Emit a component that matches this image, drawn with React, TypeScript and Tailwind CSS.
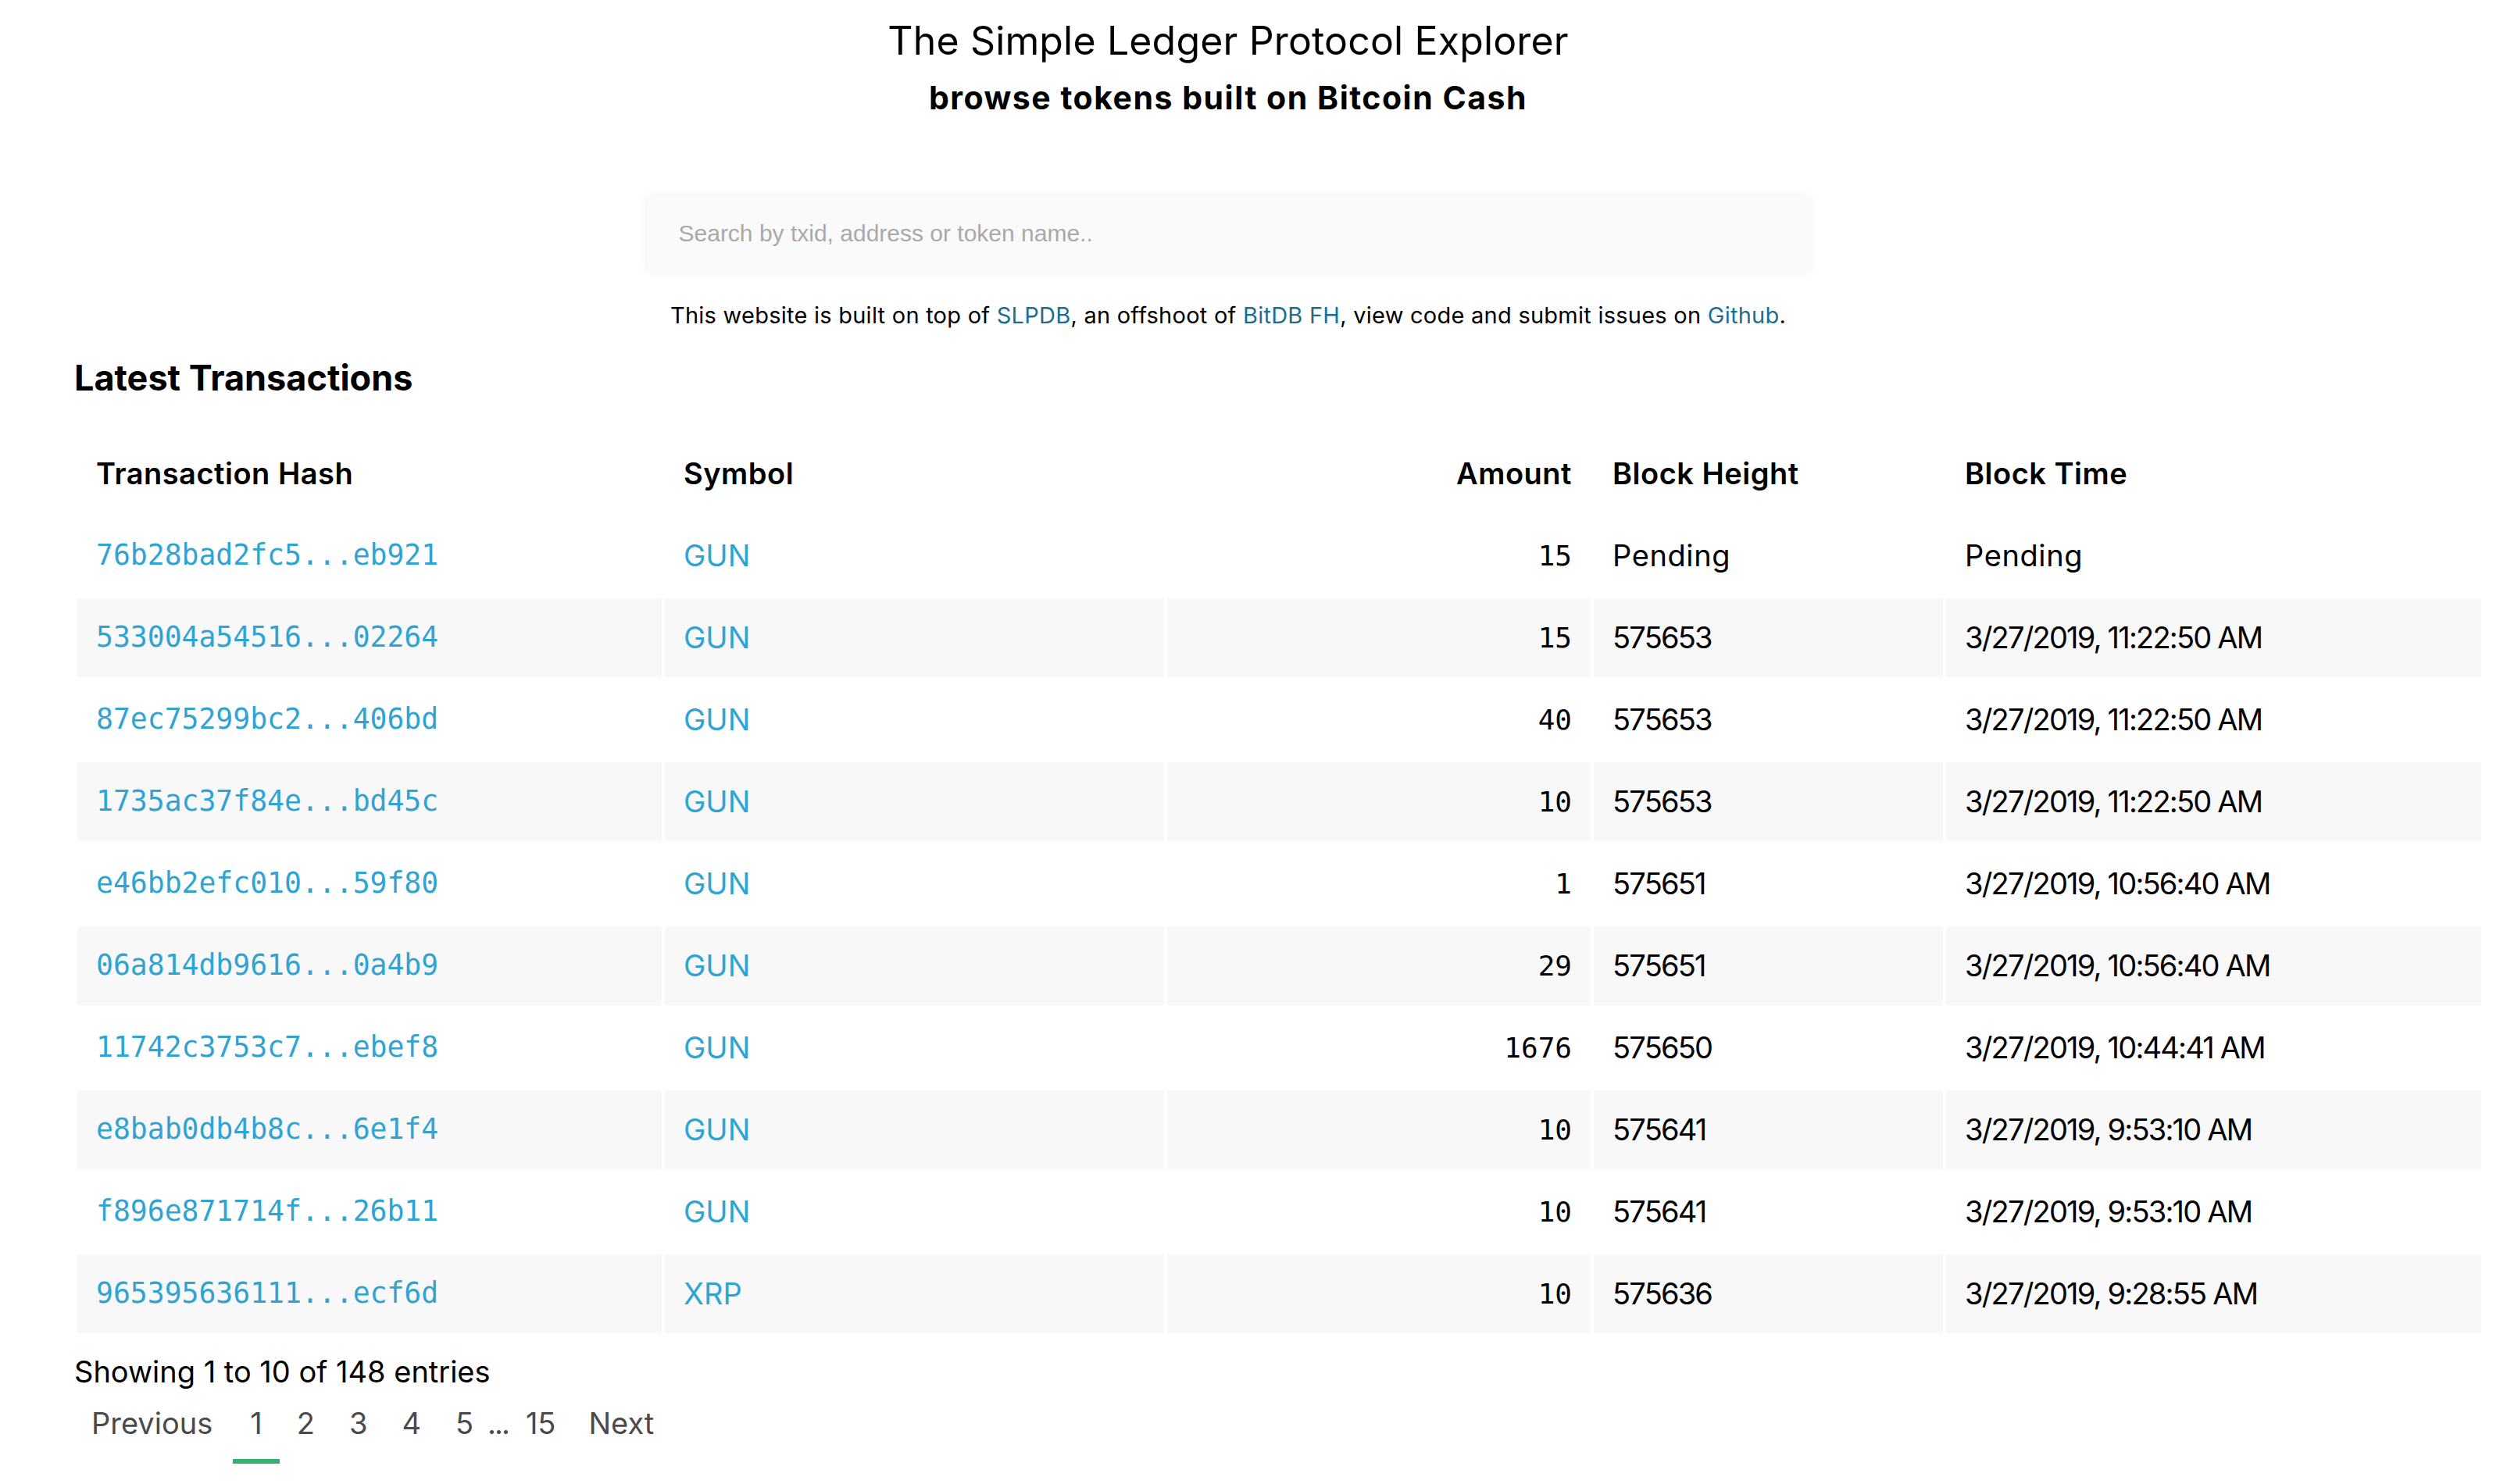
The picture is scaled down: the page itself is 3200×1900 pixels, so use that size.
const rows = [
  { hash: "76b28bad2fc5...eb921", sym: "GUN", amount: "15", height: "Pending", time: "Pending" },
  { hash: "533004a54516...02264", sym: "GUN", amount: "15", height: "575653", time: "3/27/2019, 11:22:50 AM" },
  { hash: "87ec75299bc2...406bd", sym: "GUN", amount: "40", height: "575653", time: "3/27/2019, 11:22:50 AM" },
  { hash: "1735ac37f84e...bd45c", sym: "GUN", amount: "10", height: "575653", time: "3/27/2019, 11:22:50 AM" },
  { hash: "e46bb2efc010...59f80", sym: "GUN", amount: "1", height: "575651", time: "3/27/2019, 10:56:40 AM" },
  { hash: "06a814db9616...0a4b9", sym: "GUN", amount: "29", height: "575651", time: "3/27/2019, 10:56:40 AM" },
  { hash: "11742c3753c7...ebef8", sym: "GUN", amount: "1676", height: "575650", time: "3/27/2019, 10:44:41 AM" },
  { hash: "e8bab0db4b8c...6e1f4", sym: "GUN", amount: "10", height: "575641", time: "3/27/2019, 9:53:10 AM" },
  { hash: "f896e871714f...26b11", sym: "GUN", amount: "10", height: "575641", time: "3/27/2019, 9:53:10 AM" },
  { hash: "965395636111...ecf6d", sym: "XRP", amount: "10", height: "575636", time: "3/27/2019, 9:28:55 AM" },
];

const pages = ["1", "2", "3", "4", "5"];

// numbers in the original font run narrower than Inter's, letters wider
function numCls(v: string) {
  return v === "Pending" ? "px-[24px] tracking-[0.6px]" : "px-[24px] tracking-[-1.8px]";
}

export default function App() {
  return (
    <div className="min-h-screen bg-white text-black font-['Inter',sans-serif]">
      <header className="w-[3144px] flex flex-col items-center pt-[22px]">
        <h1 className="text-[50px] leading-[60px] font-normal tracking-[0.15px]">The Simple Ledger Protocol Explorer</h1>
        <h2 className="mt-[19px] text-[41px] leading-[48px] font-bold tracking-[1.5px]">browse tokens built on Bitcoin Cash</h2>
        <div className="mt-[101px] w-[1489px] h-[97px] bg-[#fafafa] shadow-[0_0_12px_rgba(0,0,0,0.06)] flex items-center pl-[41px] pr-[20px]">
          <input
            type="text"
            placeholder="Search by txid, address or token name.."
            className="w-full bg-transparent outline-none text-[30px] font-['Liberation_Sans',sans-serif] placeholder:text-[#a9a9a9]"
          />
        </div>
        <p className="mt-[40px] text-[29px] leading-[34px] tracking-[0.25px]">
          This website is built on top of <a className="text-[#1d6e8e]">SLPDB</a>, an offshoot of{" "}
          <a className="text-[#1d6e8e]">BitDB FH</a>, view code and submit issues on{" "}
          <a className="text-[#1d6e8e]">Github</a>.
        </p>
      </header>

      <main className="pl-[95px]">
        <h3 className="mt-[36px] text-[45px] leading-[54px] font-bold">Latest Transactions</h3>

        <table className="mt-[41px] w-[3085px] table-fixed border-separate border-spacing-[4px] text-[38px]">
          <thead>
            <tr className="h-[101px] text-[38px] font-semibold tracking-[0.5px]">
              <th className="w-[748px] px-[24px] text-left font-semibold">Transaction Hash</th>
              <th className="w-[639px] px-[24px] text-left font-semibold">Symbol</th>
              <th className="w-[542px] px-[24px] text-right font-semibold">Amount</th>
              <th className="w-[447px] px-[24px] text-left font-semibold">Block Height</th>
              <th className="w-[685px] px-[24px] text-left font-semibold">Block Time</th>
            </tr>
          </thead>
          <tbody>
            {rows.map((r, i) => (
              <tr key={r.hash} className={i % 2 === 1 ? "h-[101px] bg-[#f8f8f8]" : "h-[101px]"}>
                <td className="px-[24px] font-['DejaVu_Sans_Mono',monospace] text-[36.4px] text-[#2fa4d3]">
                  <a>{r.hash}</a>
                </td>
                <td className="px-[24px] text-[#2fa4d3]">
                  <a>{r.sym}</a>
                </td>
                <td className="px-[24px] text-right font-['DejaVu_Sans_Mono',monospace] text-[36px]">{r.amount}</td>
                <td className={numCls(r.height)}>{r.height}</td>
                <td className={numCls(r.time)}>{r.time}</td>
              </tr>
            ))}
          </tbody>
        </table>

        <p className="mt-[23px] text-[38px] leading-[45px]">Showing 1 to 10 of 148 entries</p>

        <nav className="mt-[21px] flex items-start text-[38px] leading-[45px] text-[#4a4a4a]">
          <a className="pl-[22px] pr-[26px] pb-[23px]">Previous</a>
          {pages.map((p) => (
            <a
              key={p}
              className={
                p === "1"
                  ? "px-[22px] pb-[23px] border-b-[6px] border-[#34b36e]"
                  : "px-[22px] pb-[23px]"
              }
            >
              {p}
            </a>
          ))}
          <span className="-ml-[4px] tracking-[-2px]">...</span>
          <a className="px-[22px]">15</a>
          <a className="pl-[20px]">Next</a>
        </nav>
      </main>
    </div>
  );
}
